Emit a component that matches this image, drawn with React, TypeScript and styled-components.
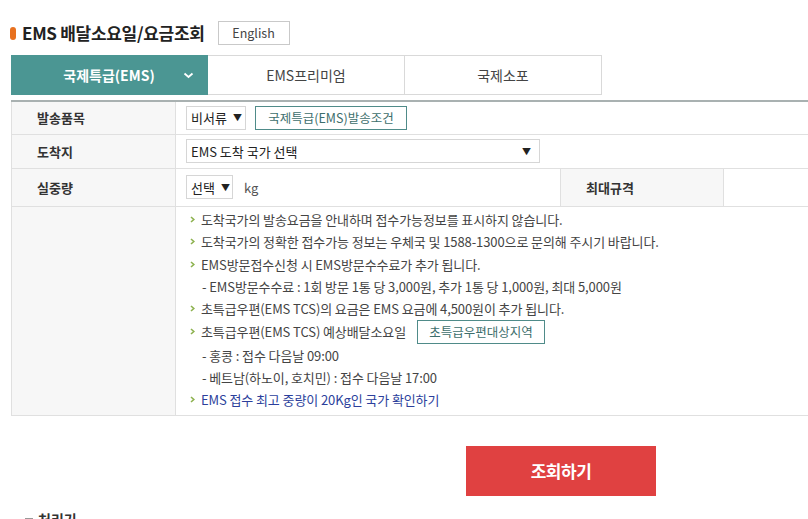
import React from "react";
import styled, { createGlobalStyle } from "styled-components";

const Global = createGlobalStyle`
  html, body { margin: 0; padding: 0; background: #fff; overflow: hidden; }
  body { font-family: "Noto Sans CJK KR", "Noto Sans", sans-serif; color: #333; }
  * { box-sizing: border-box; }
`;

const Page = styled.div`
  width: 1200px;
  padding: 19px 0 0 11px;
`;

const TitleRow = styled.div`
  display: flex;
  align-items: center;
  height: 27px;
`;

const Marker = styled.span`
  display: inline-block;
  width: 6px;
  height: 13px;
  border-radius: 3px;
  background: #e8711f;
  margin: 2px 6px 0 -1px;
`;

const Title = styled.h1`
  margin: 0;
  font-size: 17px;
  font-weight: 700;
  color: #222;
  letter-spacing: -0.3px;
`;

const LangButton = styled.button`
  margin-left: 13px;
  width: 72px;
  height: 24px;
  border: 1px solid #c9c9c9;
  background: #fff;
  font-family: inherit;
  font-size: 12.5px;
  color: #444;
  padding: 0;
`;

const Tabs = styled.div`
  display: flex;
  margin-top: 9px;
  height: 40px;
`;

const Tab = styled.div<{ $active?: boolean }>`
  width: 197px;
  display: flex;
  align-items: center;
  justify-content: center;
  position: relative;
  font-size: 14px;
  background: ${(p) => (p.$active ? "#4b9693" : "#fff")};
  color: ${(p) => (p.$active ? "#fff" : "#444")};
  font-weight: ${(p) => (p.$active ? 700 : 400)};
  border-top: 1px solid ${(p) => (p.$active ? "#4b9693" : "#d9d9d9")};
  border-bottom: 1px solid ${(p) => (p.$active ? "#4b9693" : "#d9d9d9")};
  border-right: 1px solid ${(p) => (p.$active ? "#4b9693" : "#d9d9d9")};
`;

const TabChevron = styled.svg`
  position: absolute;
  right: 13px;
  top: 16px;
`;

const Table = styled.table`
  margin-top: 5px;
  width: 1100px;
  border-collapse: collapse;
  border-top: 2px solid #a9b1b1;
  table-layout: fixed;
  font-size: 13px;
`;

const Th = styled.th<{ $h?: number }>`
  background: #f7f7f7;
  border: 1px solid #e0e0e0;
  text-align: left;
  font-weight: 700;
  color: #333;
  padding: 0 0 0 25px;
  height: ${(p) => p.$h ?? 33}px;
  font-size: 13px;
`;

const Td = styled.td`
  border: 1px solid #e0e0e0;
  padding: 0 0 0 10px;
  color: #444;
`;

const CellRow = styled.div`
  display: flex;
  align-items: center;
  gap: 9px;
`;

const Select = styled.div<{ $w: number; $spread?: boolean }>`
  width: ${(p) => p.$w}px;
  height: 24px;
  border: 1px solid #d6d6d6;
  display: flex;
  align-items: center;
  justify-content: ${(p) => (p.$spread ? "space-between" : "flex-start")};
  gap: 6px;
  padding: 0 8px 0 4px;
  font-size: 13px;
  color: #222;
  background: #fff;
  white-space: nowrap;
`;

const Arrow = styled.span`
  font-size: 9px;
  color: #222;
`;

const OutlineButton = styled.button<{ $w: number; $ml?: number }>`
  width: ${(p) => p.$w}px;
  height: 24px;
  margin-left: ${(p) => p.$ml ?? 0}px;
  border: 1px solid #4f8b89;
  background: #fff;
  color: #3d6e6c;
  font-family: inherit;
  font-size: 12.5px;
  padding: 0;
  white-space: nowrap;
`;

const Unit = styled.span`
  margin-left: 2px;
  color: #555;
`;

const InfoCell = styled.td`
  border: 1px solid #e0e0e0;
  padding: 2px 0 4px 14px;
  vertical-align: top;
`;

const InfoList = styled.ul`
  list-style: none;
  margin: 0;
  padding: 0;
  font-size: 13px;
  color: #444;
  letter-spacing: -0.1px;
`;

const Item = styled.li<{ $sub?: boolean; $link?: boolean }>`
  display: flex;
  align-items: center;
  min-height: 22.3px;
  padding-left: ${(p) => (p.$sub ? 12 : 0)}px;
  color: ${(p) => (p.$link ? "#2c3f9c" : "#444")};
  white-space: nowrap;
`;

const Bullet = styled.svg`
  margin-right: 6px;
  flex: none;
`;

const BtnWrap = styled.div`
  width: 1100px;
  display: flex;
  justify-content: center;
  margin-top: 30px;
`;

const Submit = styled.button`
  width: 190px;
  height: 50px;
  border: none;
  background: #e04141;
  color: #fff;
  font-family: inherit;
  font-weight: 700;
  font-size: 17px;
  letter-spacing: -0.5px;
`;

const SubTitle = styled.h2`
  margin: 15px 0 0 14px;
  font-size: 14px;
  line-height: 16px;
  font-weight: 700;
  color: #333;
  display: flex;
  align-items: center;
  gap: 5px;
  &::before {
    content: "";
    width: 8px;
    height: 2px;
    background: #999;
  }
`;

const Chev = () => (
  <Bullet width="5" height="7" viewBox="0 0 5 7">
    <path d="M1 1 L3.8 3.5 L1 6" fill="none" stroke="#8db24f" strokeWidth="1.6" />
  </Bullet>
);

export default function App() {
  return (
    <>
      <Global />
      <Page>
        <TitleRow>
          <Marker />
          <Title>EMS 배달소요일/요금조회</Title>
          <LangButton>English</LangButton>
        </TitleRow>
        <Tabs>
          <Tab $active>
            국제특급(EMS)
            <TabChevron width="11" height="7" viewBox="0 0 11 7">
              <path d="M1.5 1.5 L5.5 5 L9.5 1.5" fill="none" stroke="#fff" strokeWidth="1.8" />
            </TabChevron>
          </Tab>
          <Tab>EMS프리미엄</Tab>
          <Tab>국제소포</Tab>
        </Tabs>
        <Table>
          <colgroup>
            <col style={{ width: 164 }} />
            <col style={{ width: 385 }} />
            <col style={{ width: 163 }} />
            <col />
          </colgroup>
          <tbody>
            <tr>
              <Th>발송품목</Th>
              <Td colSpan={3}>
                <CellRow>
                  <Select $w={60}>
                    비서류<Arrow>▼</Arrow>
                  </Select>
                  <OutlineButton $w={152}>국제특급(EMS)발송조건</OutlineButton>
                </CellRow>
              </Td>
            </tr>
            <tr>
              <Th $h={34}>도착지</Th>
              <Td colSpan={3}>
                <Select $w={354} $spread>
                  EMS 도착 국가 선택 <Arrow>▼</Arrow>
                </Select>
              </Td>
            </tr>
            <tr>
              <Th $h={38}>실중량</Th>
              <Td>
                <CellRow>
                  <Select $w={47}>
                    선택<Arrow>▼</Arrow>
                  </Select>
                  <Unit>kg</Unit>
                </CellRow>
              </Td>
              <Th $h={38}>최대규격</Th>
              <Td />
            </tr>
            <tr>
              <Th $h={206} />
              <InfoCell colSpan={3}>
                <InfoList>
                  <Item><Chev />도착국가의 발송요금을 안내하며 접수가능정보를 표시하지 않습니다.</Item>
                  <Item><Chev />도착국가의 정확한 접수가능 정보는 우체국 및 1588-1300으로 문의해 주시기 바랍니다.</Item>
                  <Item><Chev />EMS방문접수신청 시 EMS방문수수료가 추가 됩니다.</Item>
                  <Item $sub>- EMS방문수수료 : 1회 방문 1통 당 3,000원, 추가 1통 당 1,000원, 최대 5,000원</Item>
                  <Item><Chev />초특급우편(EMS TCS)의 요금은 EMS 요금에 4,500원이 추가 됩니다.</Item>
                  <Item>
                    <Chev />초특급우편(EMS TCS) 예상배달소요일
                    <OutlineButton $w={128} $ml={11}>초특급우편대상지역</OutlineButton>
                  </Item>
                  <Item $sub>- 홍콩 : 접수 다음날 09:00</Item>
                  <Item $sub>- 베트남(하노이, 호치민) : 접수 다음날 17:00</Item>
                  <Item $link><Chev />EMS 접수 최고 중량이 20Kg인 국가 확인하기</Item>
                </InfoList>
              </InfoCell>
            </tr>
          </tbody>
        </Table>
        <BtnWrap>
          <Submit>조회하기</Submit>
        </BtnWrap>
        <SubTitle>처리기</SubTitle>
      </Page>
    </>
  );
}
